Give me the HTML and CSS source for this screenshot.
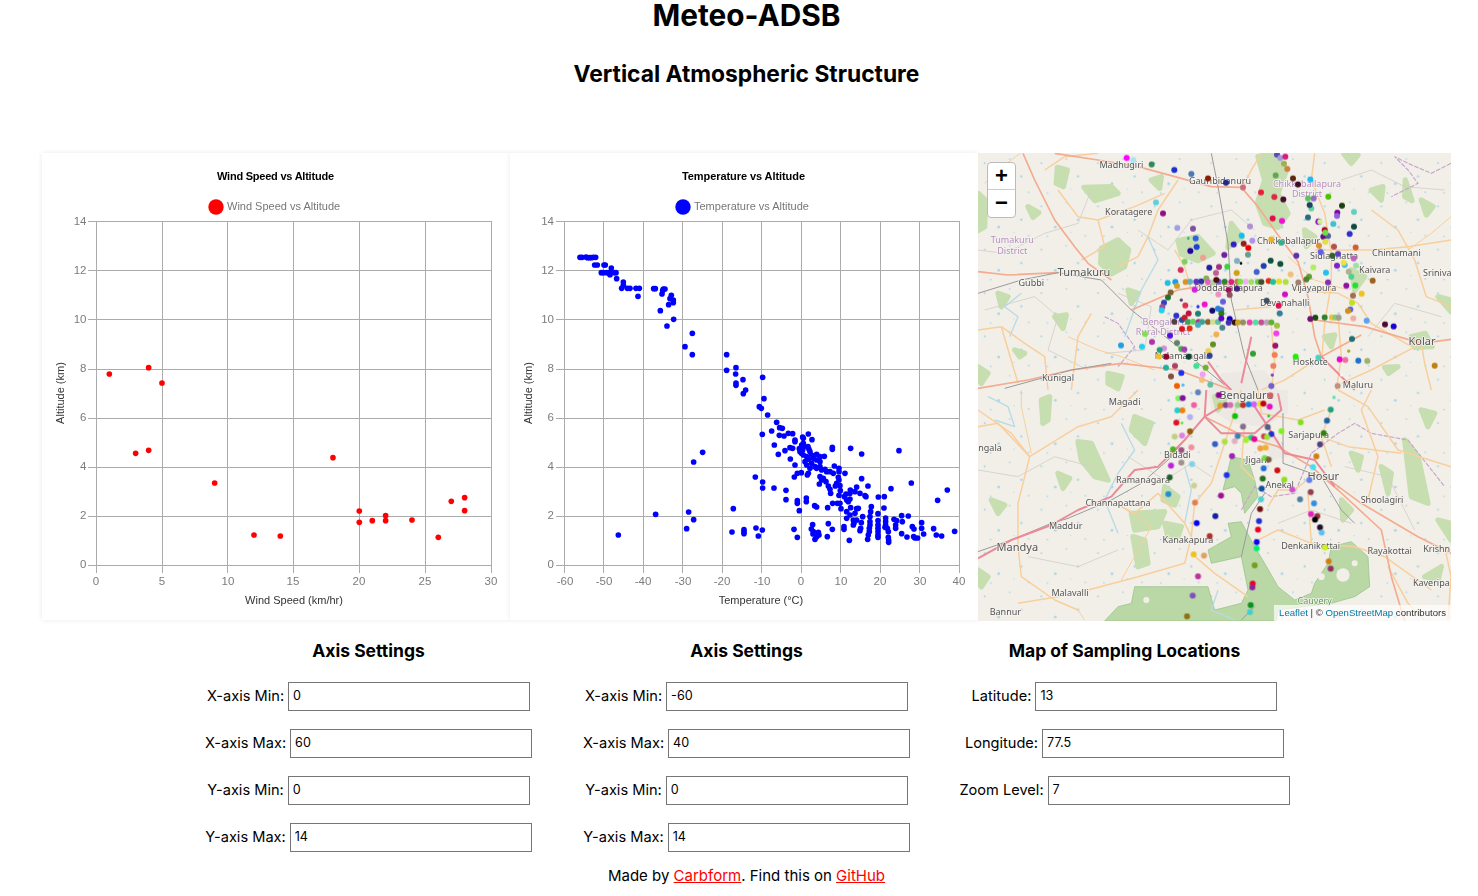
FILE: index.html
```html
<!DOCTYPE html>
<html lang="en">
<head>
<meta charset="utf-8">
<title>Meteo-ADSB</title>
<link rel="stylesheet" href="styles.css">
</head>
<body>
<div class="page">
<h1>Meteo-ADSB</h1>
<h2>Vertical Atmospheric Structure</h2>
<div class="charts">
<div class="card">
<svg class="chart" width="468" height="467" viewBox="42 153 468 467">
<text class="c-title" x="275.5" y="180" textLength="117">Wind Speed vs Altitude</text>
<circle class="red" cx="216" cy="207" r="7.7"/>
<text class="c-legend" x="227" y="210">Wind Speed vs Altitude</text>
<path class="grid" d="M96.5 221V573M162.5 221V573M227.5 221V573M293.5 221V573M359.5 221V573M425.5 221V573M491.5 221V573M88 221.5H491.5M88 270.5H491.5M88 319.5H491.5M88 369.5H491.5M88 418.5H491.5M88 467.5H491.5M88 516.5H491.5M88 565.5H491.5"/>
<g class="c-tick-y"><text x="86.5" y="225">14</text><text x="86.5" y="274">12</text><text x="86.5" y="323">10</text><text x="86.5" y="372">8</text><text x="86.5" y="421">6</text><text x="86.5" y="470">4</text><text x="86.5" y="519">2</text><text x="86.5" y="568">0</text></g>
<g class="c-tick-x"><text x="96" y="585">0</text><text x="162" y="585">5</text><text x="228" y="585">10</text><text x="293" y="585">15</text><text x="359" y="585">20</text><text x="425" y="585">25</text><text x="491" y="585">30</text></g>
<text class="c-axis" x="294" y="604">Wind Speed (km/hr)</text>
<text class="c-axis" transform="translate(64,393) rotate(-90)">Altitude (km)</text>
<g class="red" transform="translate(40,340) scale(.3333)">
<circle cx="208" cy="102" r="8.5"/><circle cx="326" cy="83" r="8.5"/><circle cx="366" cy="129" r="8.5"/><circle cx="287" cy="340" r="8.5"/><circle cx="326" cy="331" r="8.5"/><circle cx="524" cy="429" r="8.5"/><circle cx="642" cy="585" r="8.5"/><circle cx="721" cy="588" r="8.5"/><circle cx="879" cy="353" r="8.5"/><circle cx="958" cy="513" r="8.5"/><circle cx="958" cy="547" r="8.5"/><circle cx="997" cy="542" r="8.5"/><circle cx="1037" cy="527" r="8.5"/><circle cx="1037" cy="542" r="8.5"/><circle cx="1116" cy="540" r="8.5"/><circle cx="1195" cy="592" r="8.5"/><circle cx="1234" cy="484" r="8.5"/><circle cx="1274" cy="473" r="8.5"/><circle cx="1274" cy="512" r="8.5"/>
</g>
</svg>
</div>
<div class="card">
<svg class="chart" width="468" height="467" viewBox="510 153 468 467">
<text class="c-title" x="743.5" y="180" textLength="123">Temperature vs Altitude</text>
<circle class="blue" cx="683" cy="207" r="7.7"/>
<text class="c-legend" x="694" y="210">Temperature vs Altitude</text>
<path class="grid" d="M564.5 221V573M603.5 221V573M643.5 221V573M682.5 221V573M722.5 221V573M761.5 221V573M801.5 221V573M840.5 221V573M880.5 221V573M919.5 221V573M959.5 221V573M556 221.5H959.5M556 270.5H959.5M556 319.5H959.5M556 369.5H959.5M556 418.5H959.5M556 467.5H959.5M556 516.5H959.5M556 565.5H959.5"/>
<g class="c-tick-y"><text x="554" y="225">14</text><text x="554" y="274">12</text><text x="554" y="323">10</text><text x="554" y="372">8</text><text x="554" y="421">6</text><text x="554" y="470">4</text><text x="554" y="519">2</text><text x="554" y="568">0</text></g>
<g class="c-tick-x"><text x="565" y="585">-60</text><text x="604" y="585">-50</text><text x="643" y="585">-40</text><text x="683" y="585">-30</text><text x="722" y="585">-20</text><text x="762" y="585">-10</text><text x="801" y="585">0</text><text x="841" y="585">10</text><text x="880" y="585">20</text><text x="920" y="585">30</text><text x="959" y="585">40</text></g>
<text class="c-axis" x="761" y="604">Temperature (°C)</text>
<text class="c-axis" transform="translate(532,393) rotate(-90)">Altitude (km)</text>
<g class="blue" transform="translate(500,200) scale(.3333)">
<circle cx="240" cy="172" r="8.5"/><circle cx="246" cy="172" r="8.5"/><circle cx="258" cy="171" r="8.5"/><circle cx="262" cy="173" r="8.5"/><circle cx="268" cy="173" r="8.5"/><circle cx="274" cy="173" r="8.5"/><circle cx="280" cy="172" r="8.5"/><circle cx="287" cy="172" r="8.5"/><circle cx="284" cy="195" r="8.5"/><circle cx="292" cy="195" r="8.5"/><circle cx="312" cy="195" r="8.5"/><circle cx="316" cy="195" r="8.5"/><circle cx="334" cy="204" r="8.5"/><circle cx="304" cy="218" r="8.5"/><circle cx="310" cy="218" r="8.5"/><circle cx="320" cy="218" r="8.5"/><circle cx="326" cy="218" r="8.5"/><circle cx="334" cy="216" r="8.5"/><circle cx="342" cy="218" r="8.5"/><circle cx="348" cy="218" r="8.5"/><circle cx="330" cy="224" r="8.5"/><circle cx="350" cy="236" r="8.5"/><circle cx="370" cy="246" r="8.5"/><circle cx="370" cy="256" r="8.5"/><circle cx="365" cy="265" r="8.5"/><circle cx="382" cy="265" r="8.5"/><circle cx="390" cy="265" r="8.5"/><circle cx="408" cy="265" r="8.5"/><circle cx="418" cy="265" r="8.5"/><circle cx="461" cy="266" r="8.5"/><circle cx="466" cy="266" r="8.5"/><circle cx="490" cy="267" r="8.5"/><circle cx="495" cy="267" r="8.5"/><circle cx="488" cy="272" r="8.5"/><circle cx="486" cy="282" r="8.5"/><circle cx="514" cy="286" r="8.5"/><circle cx="510" cy="296" r="8.5"/><circle cx="520" cy="300" r="8.5"/><circle cx="520" cy="308" r="8.5"/><circle cx="506" cy="314" r="8.5"/><circle cx="414" cy="289" r="8.5"/><circle cx="481" cy="332" r="8.5"/><circle cx="521" cy="358" r="8.5"/><circle cx="501" cy="378" r="8.5"/><circle cx="577" cy="400" r="8.5"/><circle cx="555" cy="440" r="8.5"/><circle cx="577" cy="464" r="8.5"/><circle cx="680" cy="464" r="8.5"/><circle cx="680" cy="511" r="8.5"/><circle cx="708" cy="503" r="8.5"/><circle cx="707" cy="522" r="8.5"/><circle cx="729" cy="539" r="8.5"/><circle cx="708" cy="549" r="8.5"/><circle cx="708" cy="556" r="8.5"/><circle cx="788" cy="532" r="8.5"/><circle cx="737" cy="570" r="8.5"/><circle cx="730" cy="581" r="8.5"/><circle cx="792" cy="596" r="8.5"/>
</g>
<g class="blue" transform="translate(510,340) scale(.3333)">
<circle cx="748" cy="200" r="8.5"/><circle cx="754" cy="205" r="8.5"/><circle cx="773" cy="225" r="8.5"/><circle cx="757" cy="283" r="8.5"/><circle cx="578" cy="337" r="8.5"/><circle cx="551" cy="366" r="8.5"/><circle cx="736" cy="411" r="8.5"/><circle cx="758" cy="426" r="8.5"/><circle cx="758" cy="444" r="8.5"/><circle cx="670" cy="506" r="8.5"/><circle cx="437" cy="523" r="8.5"/><circle cx="536" cy="516" r="8.5"/><circle cx="551" cy="539" r="8.5"/><circle cx="530" cy="566" r="8.5"/><circle cx="325" cy="585" r="8.5"/><circle cx="666" cy="576" r="8.5"/><circle cx="702" cy="569" r="8.5"/><circle cx="702" cy="575" r="8.5"/><circle cx="702" cy="581" r="8.5"/><circle cx="738" cy="564" r="8.5"/><circle cx="757" cy="570" r="8.5"/><circle cx="745" cy="588" r="8.5"/>
</g>
<g class="blue" transform="translate(640,400) scale(.3333)">
<circle cx="410" cy="67" r="8.5"/><circle cx="419" cy="83" r="8.5"/><circle cx="427" cy="85" r="8.5"/><circle cx="395" cy="93" r="8.5"/><circle cx="418" cy="106" r="8.5"/><circle cx="432" cy="108" r="8.5"/><circle cx="445" cy="100" r="8.5"/><circle cx="458" cy="101" r="8.5"/><circle cx="488" cy="111" r="8.5"/><circle cx="490" cy="115" r="8.5"/><circle cx="505" cy="102" r="8.5"/><circle cx="516" cy="119" r="8.5"/><circle cx="465" cy="120" r="8.5"/><circle cx="465" cy="125" r="8.5"/><circle cx="403" cy="135" r="8.5"/><circle cx="450" cy="143" r="8.5"/><circle cx="458" cy="145" r="8.5"/><circle cx="435" cy="152" r="8.5"/><circle cx="415" cy="163" r="8.5"/><circle cx="451" cy="177" r="8.5"/><circle cx="465" cy="195" r="8.5"/><circle cx="472" cy="220" r="8.5"/><circle cx="484" cy="218" r="8.5"/><circle cx="463" cy="231" r="8.5"/>
<circle cx="478" cy="146" r="8.5"/><circle cx="485" cy="135" r="8.5"/><circle cx="490" cy="130" r="8.5"/><circle cx="492" cy="140" r="8.5"/><circle cx="504" cy="140" r="8.5"/><circle cx="507" cy="148" r="8.5"/><circle cx="480" cy="155" r="8.5"/><circle cx="488" cy="150" r="8.5"/><circle cx="490" cy="165" r="8.5"/><circle cx="485" cy="160" r="8.5"/><circle cx="510" cy="155" r="8.5"/><circle cx="515" cy="165" r="8.5"/><circle cx="530" cy="163" r="8.5"/><circle cx="540" cy="170" r="8.5"/><circle cx="553" cy="169" r="8.5"/><circle cx="500" cy="170" r="8.5"/><circle cx="505" cy="178" r="8.5"/><circle cx="520" cy="175" r="8.5"/><circle cx="530" cy="180" r="8.5"/><circle cx="540" cy="185" r="8.5"/><circle cx="495" cy="185" r="8.5"/><circle cx="500" cy="195" r="8.5"/><circle cx="515" cy="190" r="8.5"/><circle cx="525" cy="200" r="8.5"/><circle cx="530" cy="205" r="8.5"/><circle cx="540" cy="200" r="8.5"/><circle cx="545" cy="210" r="8.5"/><circle cx="555" cy="208" r="8.5"/><circle cx="560" cy="215" r="8.5"/><circle cx="570" cy="215" r="8.5"/><circle cx="580" cy="220" r="8.5"/><circle cx="510" cy="205" r="8.5"/><circle cx="505" cy="220" r="8.5"/><circle cx="502" cy="225" r="8.5"/><circle cx="540" cy="230" r="8.5"/><circle cx="550" cy="235" r="8.5"/><circle cx="545" cy="240" r="8.5"/><circle cx="558" cy="245" r="8.5"/><circle cx="565" cy="258" r="8.5"/><circle cx="570" cy="268" r="8.5"/><circle cx="572" cy="280" r="8.5"/><circle cx="538" cy="252" r="8.5"/><circle cx="577" cy="142" r="8.5"/><circle cx="577" cy="148" r="8.5"/><circle cx="632" cy="145" r="8.5"/><circle cx="665" cy="162" r="8.5"/><circle cx="777" cy="152" r="8.5"/><circle cx="583" cy="198" r="8.5"/><circle cx="597" cy="205" r="8.5"/><circle cx="597" cy="215" r="8.5"/><circle cx="615" cy="220" r="8.5"/><circle cx="595" cy="232" r="8.5"/><circle cx="597" cy="240" r="8.5"/><circle cx="590" cy="250" r="8.5"/><circle cx="586" cy="258" r="8.5"/><circle cx="600" cy="257" r="8.5"/><circle cx="665" cy="236" r="8.5"/><circle cx="684" cy="258" r="8.5"/><circle cx="650" cy="261" r="8.5"/><circle cx="631" cy="270" r="8.5"/><circle cx="618" cy="282" r="8.5"/><circle cx="630" cy="280" r="8.5"/><circle cx="645" cy="275" r="8.5"/><circle cx="660" cy="280" r="8.5"/><circle cx="675" cy="287" r="8.5"/><circle cx="678" cy="290" r="8.5"/><circle cx="601" cy="272" r="8.5"/><circle cx="597" cy="286" r="8.5"/><circle cx="613" cy="290" r="8.5"/><circle cx="620" cy="300" r="8.5"/><circle cx="630" cy="297" r="8.5"/><circle cx="625" cy="305" r="8.5"/><circle cx="753" cy="266" r="8.5"/><circle cx="715" cy="291" r="8.5"/><circle cx="733" cy="290" r="8.5"/><circle cx="814" cy="249" r="8.5"/><circle cx="922" cy="270" r="8.5"/><circle cx="893" cy="301" r="8.5"/>
<circle cx="402" cy="264" r="8.5"/><circle cx="438" cy="271" r="8.5"/><circle cx="438" cy="299" r="8.5"/><circle cx="472" cy="302" r="8.5"/><circle cx="472" cy="310" r="8.5"/><circle cx="499" cy="294" r="8.5"/><circle cx="499" cy="305" r="8.5"/><circle cx="478" cy="332" r="8.5"/><circle cx="524" cy="317" r="8.5"/><circle cx="530" cy="321" r="8.5"/><circle cx="563" cy="323" r="8.5"/><circle cx="578" cy="310" r="8.5"/><circle cx="592" cy="310" r="8.5"/><circle cx="600" cy="310" r="8.5"/><circle cx="603" cy="326" r="8.5"/><circle cx="620" cy="335" r="8.5"/><circle cx="632" cy="323" r="8.5"/><circle cx="650" cy="326" r="8.5"/><circle cx="655" cy="325" r="8.5"/><circle cx="645" cy="340" r="8.5"/><circle cx="630" cy="345" r="8.5"/><circle cx="620" cy="355" r="8.5"/><circle cx="668" cy="350" r="8.5"/><circle cx="640" cy="360" r="8.5"/><circle cx="642" cy="370" r="8.5"/><circle cx="640" cy="375" r="8.5"/><circle cx="650" cy="360" r="8.5"/><circle cx="664" cy="368" r="8.5"/><circle cx="662" cy="385" r="8.5"/><circle cx="660" cy="392" r="8.5"/><circle cx="612" cy="380" r="8.5"/><circle cx="612" cy="388" r="8.5"/><circle cx="565" cy="371" r="8.5"/><circle cx="577" cy="388" r="8.5"/><circle cx="518" cy="374" r="8.5"/><circle cx="514" cy="387" r="8.5"/><circle cx="520" cy="395" r="8.5"/><circle cx="519" cy="402" r="8.5"/><circle cx="535" cy="397" r="8.5"/><circle cx="537" cy="405" r="8.5"/><circle cx="530" cy="410" r="8.5"/><circle cx="525" cy="418" r="8.5"/><circle cx="462" cy="388" r="8.5"/><circle cx="472" cy="412" r="8.5"/><circle cx="562" cy="410" r="8.5"/>
<circle cx="694" cy="320" r="8.5"/><circle cx="692" cy="335" r="8.5"/><circle cx="690" cy="350" r="8.5"/><circle cx="690" cy="365" r="8.5"/><circle cx="690" cy="375" r="8.5"/><circle cx="688" cy="385" r="8.5"/><circle cx="688" cy="395" r="8.5"/><circle cx="685" cy="405" r="8.5"/><circle cx="683" cy="418" r="8.5"/><circle cx="714" cy="341" r="8.5"/><circle cx="714" cy="362" r="8.5"/><circle cx="714" cy="375" r="8.5"/><circle cx="714" cy="385" r="8.5"/><circle cx="714" cy="395" r="8.5"/><circle cx="714" cy="405" r="8.5"/><circle cx="714" cy="412" r="8.5"/><circle cx="732" cy="324" r="8.5"/><circle cx="737" cy="354" r="8.5"/><circle cx="737" cy="365" r="8.5"/><circle cx="737" cy="375" r="8.5"/><circle cx="735" cy="382" r="8.5"/><circle cx="742" cy="385" r="8.5"/><circle cx="745" cy="395" r="8.5"/><circle cx="745" cy="412" r="8.5"/><circle cx="746" cy="420" r="8.5"/><circle cx="746" cy="427" r="8.5"/><circle cx="762" cy="358" r="8.5"/><circle cx="770" cy="362" r="8.5"/><circle cx="767" cy="375" r="8.5"/><circle cx="767" cy="385" r="8.5"/><circle cx="785" cy="347" r="8.5"/><circle cx="805" cy="348" r="8.5"/><circle cx="787" cy="365" r="8.5"/><circle cx="817" cy="380" r="8.5"/><circle cx="822" cy="387" r="8.5"/><circle cx="845" cy="368" r="8.5"/><circle cx="845" cy="385" r="8.5"/><circle cx="851" cy="402" r="8.5"/><circle cx="785" cy="401" r="8.5"/><circle cx="801" cy="411" r="8.5"/><circle cx="821" cy="410" r="8.5"/><circle cx="825" cy="414" r="8.5"/><circle cx="833" cy="414" r="8.5"/><circle cx="881" cy="386" r="8.5"/><circle cx="889" cy="405" r="8.5"/><circle cx="905" cy="408" r="8.5"/><circle cx="944" cy="394" r="8.5"/><circle cx="628" cy="421" r="8.5"/>
</g>
</svg>
</div>
<div class="map">
<svg class="map-svg" width="473" height="468" viewBox="0 0 1419 1404">
<defs>
<pattern id="specks" width="170" height="130" patternUnits="userSpaceOnUse">
<circle class="speck" cx="20" cy="30" r="3"/><circle class="speck" cx="62" cy="92" r="4"/><circle class="speck" cx="95" cy="18" r="2.5"/><circle class="speck" cx="130" cy="70" r="3.5"/><circle class="speck" cx="152" cy="118" r="2.5"/><circle class="speck" cx="38" cy="120" r="2.5"/><circle class="speck" cx="108" cy="108" r="2"/>
</pattern>
</defs>
<g class="tiles">
<rect class="land" width="1419" height="1404"/>
<rect class="specks" width="1419" height="1404"/>
<g transform="translate(0,-9)">
<path class="wood" d="M840 20L880 10L925 60L900 130L930 190L900 232L860 220L838 160L860 90Z"/>
<path class="wood" d="M0 130L22 150L20 230L0 242Z"/>
<path class="wood" d="M238 52L268 60L256 110L235 100Z"/>
<path class="wood" d="M150 170L182 188L165 202Z"/>
<path class="wood" d="M370 295L420 270L452 300L440 350L400 372L368 340Z"/>
<path class="wood" d="M600 272L660 260L705 310L660 332L610 312Z"/>
<path class="wood" d="M318 112L400 110L420 130L350 152Z"/>
<path class="wood" d="M760 220L792 262L750 292Z"/>
<path class="wood" d="M1282 90L1302 152L1280 140Z"/>
<path class="wood" d="M1098 12L1140 15L1120 40Z"/>
<path class="wood" d="M1120 360L1160 380L1130 422Z"/>
<path class="wood" d="M1300 560L1342 550L1362 590L1310 592Z"/>
<path class="wood" d="M1220 652L1260 650L1232 670Z"/>
<path class="wood" d="M390 670L432 680L420 716L390 700Z"/>
<path class="wood" d="M0 650L30 670L10 700L0 690Z"/>
<path class="wood" d="M110 600L140 610L125 620Z"/>
<path class="wood" d="M60 120L85 130L70 160Z"/>
<path class="wood" d="M520 90L550 80L545 115Z"/>
<path class="wood" d="M1180 120L1215 110L1210 150Z"/>
<path class="wood" d="M1330 150L1365 170L1345 195Z"/>
<path class="wood" d="M60 430L90 440L70 470Z"/>
<path class="wood" d="M230 500L265 495L255 535Z"/>
<path class="wood" d="M450 420L480 430L460 460Z"/>
<path class="wood" d="M1040 560L1070 555L1060 590Z"/>
<path class="wood" d="M1380 440L1419 450L1419 485Z"/>
<path class="wood" d="M980 240L1010 260L985 290Z"/>
<path class="urban" d="M730 670L860 660L900 720L700 720Z"/>
<path class="minor" d="M0 300L80 310L200 250L300 220L340 120"/>
<path class="minor" d="M20 480L170 440L240 500L210 600L330 660"/>
<path class="minor" d="M480 240L570 300L640 210L760 180L830 240"/>
<path class="minor" d="M1090 90L1180 60L1280 110L1400 120"/>
<path class="minor" d="M1170 560L1250 460L1390 500"/>
<path class="minor" d="M420 430L520 470L500 600L380 610"/>
<path class="water" d="M130 430L80 470L120 500L95 560"/>
<path class="water" d="M510 260L540 330L490 420L440 560"/>
<path class="boundary" d="M1419 40L1360 70L1290 40L1250 20L1290 60L1320 100L1240 140"/>
<path class="boundary" d="M380 500L420 520L470 590L420 650"/>
<path class="road" d="M200 60L260 20L360 10"/>
<path class="road" d="M240 120L300 200L360 210L470 170L560 130"/>
<path class="road" d="M360 210L380 290L310 330"/>
<path class="road" d="M600 90L540 180L510 260L480 320L420 350"/>
<path class="road" d="M790 120L820 60L850 10"/>
<path class="road" d="M1010 10L1000 90L1040 190L1060 310L1060 400L1040 520L1030 640"/>
<path class="road" d="M1010 300L1180 300L1290 290L1419 270"/>
<path class="road" d="M1180 180L1260 240L1310 330L1345 440L1419 470"/>
<path class="road" d="M950 420L1080 430L1140 460L1180 520L1300 590"/>
<path class="road" d="M1330 580L1340 640L1360 720"/>
<path class="road" d="M1330 580L1180 660L1090 700"/>
<path class="road" d="M0 540L70 530L140 580L200 620L210 720"/>
<path class="road" d="M70 530L120 700"/>
<path class="road" d="M340 490L300 560L280 720"/>
<path class="road" d="M640 420L620 350L590 300"/>
<path class="road" d="M880 530L890 640L880 720"/>
<path class="road" d="M880 470L770 480"/>
<path class="road" d="M1080 500L1090 620L1075 720"/>
<path class="road" d="M1030 620L920 690L850 720"/>
<path class="road thin" d="M530 660L430 620L360 600L270 560"/>
<path class="road thin" d="M930 320L1010 390L1110 420"/>
<path class="road thin" d="M140 0L60 60L20 100"/>
<path class="road thin" d="M1419 200L1360 250L1290 300"/>
<path class="trunk" d="M135 10L170 90L230 210L290 290L330 340L400 390"/>
<path class="trunk" d="M0 365L90 375L240 368"/>
<path class="trunk" d="M230 10L360 30L480 50L610 85L700 110L790 112L840 170L900 255L960 335L990 440L1010 560L1030 620"/>
<path class="trunk" d="M460 480L600 420L720 400L790 410"/>
<path class="trunk" d="M1010 510L1160 530L1330 580L1419 568"/>
<path class="trunk" d="M1030 620L1150 555"/>
<path class="trunk" d="M0 715L150 690L280 660L430 640L600 660L760 720"/>
<path class="rail" d="M0 430L130 390L240 368L370 390L460 480L600 590L740 705"/>
<path class="rail" d="M700 10L720 110L750 280L760 450L800 620L840 720"/>
<path class="rail" d="M80 715L280 660L400 640"/>
<path class="motor" d="M690 635L730 690L760 720"/>
<path class="motor" d="M820 560L790 700"/>
<path class="motor" d="M1130 720L1030 620"/>
<text class="lb" x="430" y="53">Madhugiri</text>
<text class="lb" x="726" y="103">Gauribidanuru</text>
<text class="lb pur" x="987" y="110">Chikkaballapura</text>
<text class="lb pur" x="987" y="142">District</text>
<text class="lb" x="452" y="194">Koratagere</text>
<text class="lb pur" x="103" y="280">Tumakuru</text>
<text class="lb pur" x="103" y="311">District</text>
<text class="lb" x="932" y="281">Chikkaballapur</text>
<text class="lb big" x="318" y="378">Tumakuru</text>
<text class="lb" x="160" y="407">Gubbi</text>
<text class="lb" x="1068" y="328">Sidlaghatta</text>
<text class="lb" x="1255" y="317">Chintamani</text>
<text class="lb" x="1190" y="368">Kaivara</text>
<text class="lb" x="1378" y="378">Sriniva</text>
<text class="lb" x="752" y="423">Doddaballapura</text>
<text class="lb" x="1008" y="423">Vijayapura</text>
<text class="lb" x="920" y="468">Devanahalli</text>
<text class="lb pur" x="560" y="524">Bengaluru</text>
<text class="lb pur" x="555" y="555">Rural District</text>
<text class="lb" x="615" y="626">Nelamangala</text>
<text class="lb big" x="1332" y="584">Kolar</text>
<text class="lb" x="997" y="646">Hoskote</text>
<text class="lb" x="240" y="694">Kunigal</text>
<text class="lb" x="1140" y="713">Maluru</text>
</g>
<g transform="translate(0,711)">
<path class="urban" d="M690 0L930 0L930 70L860 110L760 100L700 60Z"/>
<path class="urban" d="M850 150L900 140L930 200L880 210Z"/>
<path class="wood" d="M190 30L215 20L210 90L195 100Z"/>
<path class="wood" d="M470 80L520 100L500 160L460 120Z"/>
<path class="wood" d="M300 155L340 160L390 270L350 260L310 210Z"/>
<path class="wood" d="M1280 150L1320 200L1350 340L1300 320Z"/>
<path class="wood" d="M1090 330L1120 360L1095 390Z"/>
<path class="wood" d="M460 370L560 365L540 410L470 420Z"/>
<path class="wood" d="M465 440L500 450L510 520L480 530Z"/>
<path class="wood" d="M560 290L600 320L590 345L555 330Z"/>
<path class="wood" d="M560 400L610 410L600 440L570 440Z"/>
<path class="wood" d="M0 540L30 560L10 590L0 580Z"/>
<path class="wood" d="M1380 390L1419 400L1419 450Z"/>
<path class="wood" d="M1340 560L1390 530L1380 570Z"/>
<path class="wood" d="M1210 230L1240 250L1230 310Z"/>
<path class="wood" d="M1120 190L1150 200L1140 240Z"/>
<path class="wood" d="M1330 60L1370 70L1350 110Z"/>
<path class="wood" d="M40 330L80 345L60 370Z"/>
<path class="wood" d="M240 250L275 265L255 295Z"/>
<path class="wood" d="M710 20L740 30L720 60Z"/>
<path class="park" d="M380 693L420 650L460 640L470 590L530 590L640 590L690 590L710 660L790 640L810 600L790 500L700 520L690 480L760 440L750 400L790 395L830 470L860 520L900 590L950 630L1000 610L1010 580L1050 520L1060 470L1120 455L1170 500L1175 590L1130 620L1060 640L900 660L895 693Z"/>
<path class="park" d="M735 300L760 200L810 210L830 270L840 320L800 370L790 310L770 290Z"/>
<circle class="land" cx="1095" cy="555" r="20"/><circle class="land" cx="1030" cy="560" r="10"/><circle class="land" cx="920" cy="590" r="10"/><circle class="land" cx="1130" cy="520" r="9"/><circle class="land" cx="505" cy="630" r="9"/>
<path class="minor" d="M0 240L120 260L230 200L340 230"/>
<path class="minor" d="M450 200L560 270L640 220L700 260"/>
<path class="minor" d="M1100 230L1230 260L1310 420"/>
<path class="minor" d="M150 500L300 530L420 480"/>
<path class="minor" d="M900 400L1000 360L1120 400"/>
<path class="water" d="M770 690L700 660L720 600"/>
<path class="water" d="M30 20L90 50L110 110L50 90"/>
<path class="water" d="M430 100L470 180L420 250L380 330L420 430"/>
<path class="water" d="M620 230L640 300L620 400"/>
<path class="boundary" d="M790 360L830 290L880 320L950 310L1000 190L1080 130L1130 100L1180 130L1290 150L1400 290"/>
<path class="road" d="M1080 0L1170 50L1260 180L1419 230"/>
<path class="road" d="M1000 130L1110 170L1270 190"/>
<path class="road" d="M0 60L100 130L155 200L120 340L120 470L130 560L230 630L300 660"/>
<path class="road" d="M0 110L60 100L155 200L300 110L400 80L480 0"/>
<path class="road" d="M120 640L240 620L330 600L480 560L620 520L640 440L650 340L700 280L760 100L790 0"/>
<path class="road" d="M430 350L470 370L540 310L620 400L640 440"/>
<path class="road" d="M640 490L710 550L810 620"/>
<path class="road" d="M840 450L900 420L1000 460L1130 470L1220 500L1360 600"/>
<path class="road" d="M870 350L900 300L950 300L1000 260"/>
<path class="road" d="M990 310L1000 460"/>
<path class="road" d="M1060 230L1030 140L1060 60"/>
<path class="road" d="M800 100L790 230L830 270"/>
<path class="road" d="M1180 0L1150 60L1200 200L1170 330"/>
<path class="road" d="M1230 530L1290 640L1340 690"/>
<path class="road" d="M1400 470L1419 560L1410 690"/>
<path class="road" d="M840 0L850 70L960 90L1040 60"/>
<path class="road thin" d="M130 0L130 50L160 190"/>
<path class="road thin" d="M430 350L520 410L430 570"/>
<path class="road thin" d="M300 660L320 690"/>
<path class="trunk" d="M680 80L800 140L900 170L1000 230L1080 300L1210 420L1240 560L1280 693"/>
<path class="trunk" d="M1040 260L1150 340L1320 440L1419 490"/>
<path class="rail" d="M0 485L100 450L220 400L270 385L400 330L490 280L570 210L620 150L680 80L730 50"/>
<path class="rail" d="M915 70L915 220L1030 260L1090 360L1130 400"/>
<path class="rail" d="M790 500L820 370L860 310"/>
<path class="rail" d="M790 690L830 650"/>
<path class="motor" d="M0 505L100 450L220 405L300 360L400 320L470 240L540 230L620 150L680 80L730 50"/>
<path class="motor" d="M680 80L730 130L830 130L910 60L900 10"/>
<path class="motor" d="M830 50L870 110L920 190L1010 210L1070 290"/>
<path class="motor" d="M685 0L680 80"/>
<text class="lb" x="440" y="44">Magadi</text>
<text class="lb big" x="805" y="27">Bengaluru</text>
<text class="lb" x="36" y="182">ngala</text>
<text class="lb" x="598" y="203">Bidadi</text>
<text class="lb" x="992" y="143">Sarjapura</text>
<text class="lb" x="838" y="219">Jigani</text>
<text class="lb" x="495" y="278">Ramanagara</text>
<text class="lb big" x="1036" y="271">Hosur</text>
<text class="lb" x="905" y="293">Anekal</text>
<text class="lb" x="1212" y="338">Shoolagiri</text>
<text class="lb" x="420" y="349">Channapattana</text>
<text class="lb" x="263" y="418">Maddur</text>
<text class="lb big" x="118" y="484">Mandya</text>
<text class="lb" x="630" y="460">Kanakapura</text>
<text class="lb" x="998" y="478">Denkanikottai</text>
<text class="lb" x="1235" y="491">Rayakottai</text>
<text class="lb" x="1376" y="485">Krishn</text>
<text class="lb" x="276" y="617">Malavalli</text>
<text class="lb" x="1360" y="587">Kaveripa</text>
<text class="lb" x="82" y="674">Bannur</text>
<text class="lb grn" x="1010" y="643">Cauvery</text>
</g>
</g>
<g class="dots">
<g transform="translate(0,-9)">
<circle cx="446" cy="24" r="9" fill="#f0f"/><circle cx="466" cy="30" r="9" fill="#a9e5f5"/><circle cx="521" cy="43" r="9" fill="#2e8b57"/><circle cx="589" cy="60" r="9" fill="#1a33cc"/><circle cx="640" cy="72" r="9" fill="#4a7ab5"/><circle cx="690" cy="85" r="9" fill="#8b1a00"/><circle cx="744" cy="98" r="9" fill="#1a2a8a"/><circle cx="795" cy="112" r="9" fill="#d06a7a"/><circle cx="849" cy="127" r="9" fill="#e8203a"/><circle cx="889" cy="141" r="9" fill="#dd2a4a"/><circle cx="916" cy="148" r="9" fill="#4a0a30"/><circle cx="897" cy="14" r="9" fill="#5a4ab0"/><circle cx="907" cy="24" r="9" fill="#a09ae0"/><circle cx="922" cy="20" r="9" fill="#d81b80"/><circle cx="918" cy="41" r="9" fill="#a0b050"/><circle cx="928" cy="57" r="9" fill="#d08040"/><circle cx="893" cy="76" r="9" fill="#60a850"/><circle cx="945" cy="85" r="9" fill="#5a2a10"/><circle cx="960" cy="103" r="9" fill="#3a0a20"/><circle cx="997" cy="88" r="9" fill="#20b8f0"/><circle cx="1007" cy="145" r="9" fill="#9070c0"/><circle cx="990" cy="145" r="9" fill="#60c060"/><circle cx="1051" cy="140" r="9" fill="#50c000"/><circle cx="1092" cy="167" r="9" fill="#1a4010"/><circle cx="1000" cy="175" r="9" fill="#60d0a0"/><circle cx="995" cy="165" r="9" fill="#204060"/><circle cx="1078" cy="188" r="9" fill="#8000a0"/><circle cx="1077" cy="198" r="9" fill="#9060e0"/><circle cx="1128" cy="186" r="9" fill="#60d0c0"/><circle cx="990" cy="202" r="9" fill="#2a6a7a"/><circle cx="1022" cy="215" r="10" fill="#8020c0"/><circle cx="1026" cy="215" r="8" fill="#d0f090"/><circle cx="1066" cy="222" r="9" fill="#40c0d0"/><circle cx="1128" cy="230" r="9" fill="#104a40"/><circle cx="884" cy="205" r="9" fill="#e0104a"/><circle cx="912" cy="213" r="9" fill="#f010d0"/><circle cx="816" cy="229" r="9" fill="#b090d0"/><circle cx="791" cy="257" r="9" fill="#10c0f0"/><circle cx="823" cy="272" r="9" fill="#b090f0"/><circle cx="880" cy="268" r="9" fill="#f0b020"/><circle cx="910" cy="278" r="9" fill="#30b090"/><circle cx="1040" cy="240" r="9" fill="#a01030"/><circle cx="1036" cy="260" r="9" fill="#601080"/><circle cx="1050" cy="258" r="9" fill="#5060a0"/><circle cx="1042" cy="248" r="9" fill="#70e040"/><circle cx="1042" cy="275" r="9" fill="#e0e040"/><circle cx="1115" cy="252" r="9" fill="#3030d0"/><circle cx="1023" cy="287" r="9" fill="#e09030"/><circle cx="1068" cy="290" r="9" fill="#b05050"/><circle cx="1133" cy="292" r="9" fill="#d06030"/><circle cx="1028" cy="306" r="9" fill="#6060e0"/><circle cx="1080" cy="312" r="9" fill="#5a40c0"/><circle cx="1063" cy="317" r="9" fill="#306030"/><circle cx="955" cy="317" r="9" fill="#5a30b0"/><circle cx="1127" cy="325" r="9" fill="#c060c0"/><circle cx="1100" cy="345" r="9" fill="#40c0e0"/><circle cx="1097" cy="338" r="9" fill="#f0e040"/><circle cx="1077" cy="347" r="9" fill="#8020c0"/><circle cx="1134" cy="347" r="9" fill="#a0e0a0"/><circle cx="1006" cy="352" r="9" fill="#b0f060"/><circle cx="1044" cy="368" r="9" fill="#20c0f0"/><circle cx="1112" cy="365" r="9" fill="#b0b090"/><circle cx="1120" cy="380" r="9" fill="#50d090"/><circle cx="1184" cy="392" r="9" fill="#a06020"/><circle cx="993" cy="380" r="9" fill="#60a030"/><circle cx="985" cy="388" r="9" fill="#508030"/><circle cx="938" cy="373" r="9" fill="#f0c080"/><circle cx="961" cy="397" r="9" fill="#a08070"/><circle cx="1050" cy="397" r="9" fill="#8030b0"/><circle cx="1105" cy="407" r="9" fill="#9010a0"/><circle cx="1132" cy="406" r="9" fill="#20e030"/><circle cx="1151" cy="431" r="9" fill="#f0c020"/><circle cx="1125" cy="437" r="9" fill="#a07050"/><circle cx="1122" cy="458" r="9" fill="#c0e020"/><circle cx="1117" cy="478" r="9" fill="#6060f0"/><circle cx="1110" cy="483" r="9" fill="#d09010"/><circle cx="1126" cy="505" r="9" fill="#f0b0a0"/><circle cx="1166" cy="512" r="9" fill="#60a0f0"/><circle cx="1221" cy="523" r="9" fill="#500a30"/><circle cx="1247" cy="529" r="9" fill="#2000d0"/><circle cx="1122" cy="567" r="9" fill="#207070"/><circle cx="1112" cy="603" r="5" fill="#b0a020"/><circle cx="1370" cy="647" r="9" fill="#c08010"/><circle cx="1168" cy="633" r="9" fill="#a0b070"/><circle cx="1141" cy="632" r="9" fill="#2070d0"/><circle cx="1102" cy="630" r="9" fill="#f070a0"/><circle cx="1085" cy="628" r="9" fill="#f000d0"/><circle cx="1021" cy="623" r="9" fill="#50d0c0"/><circle cx="953" cy="620" r="9" fill="#20f000"/>
<circle cx="598" cy="234" r="9" fill="#a0a0e0"/><circle cx="645" cy="236" r="9" fill="#8050a0"/><circle cx="653" cy="265" r="9" fill="#3060e0"/><circle cx="631" cy="265" r="4" fill="#30b070"/><circle cx="637" cy="303" r="9" fill="#2000a0"/><circle cx="656" cy="291" r="9" fill="#2040d0"/><circle cx="675" cy="323" r="9" fill="#f0a090"/><circle cx="555" cy="190" r="9" fill="#901080"/><circle cx="534" cy="157" r="9" fill="#60d0e0"/><circle cx="739" cy="315" r="9" fill="#7020a0"/><circle cx="767" cy="283" r="9" fill="#3020c0"/><circle cx="797" cy="281" r="9" fill="#902020"/><circle cx="811" cy="294" r="9" fill="#f00000"/><circle cx="810" cy="314" r="9" fill="#60a090"/><circle cx="777" cy="333" r="9" fill="#80b0c0"/><circle cx="789" cy="340" r="4" fill="#000"/><circle cx="878" cy="332" r="9" fill="#105040"/><circle cx="907" cy="342" r="9" fill="#105040"/><circle cx="857" cy="348" r="9" fill="#2040b0"/><circle cx="836" cy="366" r="9" fill="#4060d0"/><circle cx="748" cy="350" r="9" fill="#40d040"/><circle cx="723" cy="351" r="9" fill="#a03080"/><circle cx="694" cy="353" r="9" fill="#2020a0"/><circle cx="714" cy="369" r="9" fill="#c06090"/><circle cx="776" cy="369" r="9" fill="#d0a010"/><circle cx="620" cy="335" r="9" fill="#80d060"/><circle cx="608" cy="360" r="9" fill="#d03060"/>
<circle cx="569" cy="399" r="9" fill="#20c0e0"/><circle cx="592" cy="396" r="9" fill="#10a0f0"/><circle cx="623" cy="396" r="9" fill="#e09020"/><circle cx="636" cy="395" r="9" fill="#60b0c0"/><circle cx="655" cy="395" r="9" fill="#6030c0"/><circle cx="670" cy="394" r="9" fill="#3030a0"/><circle cx="685" cy="385" r="9" fill="#80b050"/><circle cx="690" cy="396" r="9" fill="#e060c0"/><circle cx="706" cy="397" r="9" fill="#b0d0a0"/><circle cx="722" cy="395" r="9" fill="#6060e0"/><circle cx="715" cy="390" r="9" fill="#4a1010"/><circle cx="740" cy="395" r="9" fill="#308030"/><circle cx="760" cy="396" r="9" fill="#e02080"/><circle cx="778" cy="395" r="9" fill="#c08040"/><circle cx="787" cy="395" r="9" fill="#80e040"/><circle cx="803" cy="395" r="9" fill="#f0b0f0"/><circle cx="820" cy="396" r="9" fill="#a0e060"/><circle cx="840" cy="396" r="9" fill="#70c050"/><circle cx="850" cy="396" r="9" fill="#405030"/><circle cx="872" cy="393" r="9" fill="#e03010"/><circle cx="885" cy="396" r="9" fill="#20c0a0"/><circle cx="903" cy="394" r="9" fill="#e0e020"/><circle cx="923" cy="396" r="9" fill="#b0e040"/>
<circle cx="650" cy="419" r="9" fill="#d020e0"/><circle cx="597" cy="408" r="9" fill="#d0a020"/><circle cx="578" cy="427" r="9" fill="#806030"/><circle cx="570" cy="442" r="9" fill="#207030"/><circle cx="558" cy="458" r="9" fill="#3040c0"/><circle cx="553" cy="471" r="9" fill="#a050a0"/><circle cx="551" cy="481" r="9" fill="#20d0f0"/><circle cx="622" cy="466" r="9" fill="#e03050"/><circle cx="610" cy="450" r="5" fill="#604070"/><circle cx="660" cy="470" r="5" fill="#3030f0"/><circle cx="680" cy="463" r="9" fill="#f010d0"/><circle cx="703" cy="482" r="9" fill="#101070"/><circle cx="720" cy="476" r="9" fill="#2080e0"/><circle cx="730" cy="480" r="9" fill="#4070d0"/><circle cx="735" cy="455" r="9" fill="#6060e0"/><circle cx="721" cy="433" r="9" fill="#f090c0"/><circle cx="752" cy="420" r="9" fill="#a0105a"/><circle cx="777" cy="416" r="9" fill="#402080"/><circle cx="755" cy="435" r="9" fill="#905060"/><circle cx="866" cy="452" r="9" fill="#405060"/><circle cx="921" cy="433" r="9" fill="#d010c0"/><circle cx="902" cy="467" r="9" fill="#e01050"/><circle cx="905" cy="490" r="9" fill="#30809a"/><circle cx="632" cy="490" r="9" fill="#c01040"/><circle cx="660" cy="491" r="9" fill="#208070"/>
<circle cx="589" cy="515" r="9" fill="#504040"/><circle cx="595" cy="497" r="9" fill="#3030d0"/><circle cx="612" cy="510" r="9" fill="#2050a0"/><circle cx="620" cy="503" r="9" fill="#c02030"/><circle cx="630" cy="516" r="9" fill="#40a060"/><circle cx="645" cy="515" r="9" fill="#60d060"/><circle cx="662" cy="516" r="9" fill="#b03080"/><circle cx="672" cy="516" r="9" fill="#40a090"/><circle cx="690" cy="516" r="9" fill="#906030"/><circle cx="705" cy="516" r="9" fill="#d0e090"/><circle cx="720" cy="516" r="9" fill="#60c0a0"/><circle cx="730" cy="490" r="9" fill="#208010"/><circle cx="730" cy="505" r="9" fill="#6000c0"/><circle cx="755" cy="507" r="9" fill="#1000c0"/><circle cx="752" cy="518" r="9" fill="#4030b0"/><circle cx="770" cy="517" r="9" fill="#301010"/><circle cx="780" cy="517" r="9" fill="#d0a020"/><circle cx="795" cy="517" r="9" fill="#909060"/><circle cx="815" cy="517" r="9" fill="#f040b0"/><circle cx="833" cy="517" r="9" fill="#50e0a0"/><circle cx="850" cy="517" r="9" fill="#c05090"/><circle cx="866" cy="517" r="9" fill="#c0a0c0"/><circle cx="880" cy="517" r="9" fill="#60b030"/><circle cx="897" cy="527" r="9" fill="#a0c040"/><circle cx="612" cy="537" r="9" fill="#e01020"/><circle cx="635" cy="535" r="9" fill="#e03010"/><circle cx="660" cy="525" r="9" fill="#40b0c0"/><circle cx="733" cy="533" r="9" fill="#508090"/><circle cx="501" cy="552" r="9" fill="#80e050"/><circle cx="576" cy="557" r="9" fill="#5010e0"/><circle cx="715" cy="553" r="9" fill="#f0b050"/><circle cx="895" cy="550" r="9" fill="#f040f0"/><circle cx="1012" cy="503" r="9" fill="#105010"/><circle cx="997" cy="507" r="9" fill="#701070"/><circle cx="1040" cy="502" r="9" fill="#308030"/><circle cx="1062" cy="502" r="9" fill="#f0c030"/><circle cx="1072" cy="502" r="9" fill="#80d070"/><circle cx="1082" cy="503" r="9" fill="#a0a090"/><circle cx="429" cy="586" r="9" fill="#20a0e0"/><circle cx="492" cy="590" r="9" fill="#20d0f0"/><circle cx="522" cy="576" r="9" fill="#b030b0"/><circle cx="597" cy="579" r="9" fill="#608070"/><circle cx="705" cy="583" r="9" fill="#609020"/><circle cx="892" cy="587" r="9" fill="#a01070"/><circle cx="610" cy="597" r="9" fill="#40b040"/><circle cx="619" cy="598" r="9" fill="#a040b0"/><circle cx="558" cy="595" r="9" fill="#d090e0"/><circle cx="545" cy="600" r="9" fill="#20a080"/><circle cx="691" cy="603" r="9" fill="#f0d050"/><circle cx="543" cy="619" r="9" fill="#f0c020"/><circle cx="565" cy="620" r="9" fill="#900030"/><circle cx="632" cy="620" r="9" fill="#104030"/><circle cx="695" cy="617" r="9" fill="#3040a0"/><circle cx="825" cy="611" r="9" fill="#30a030"/><circle cx="890" cy="615" r="9" fill="#f08050"/><circle cx="591" cy="648" r="9" fill="#b04060"/><circle cx="564" cy="653" r="9" fill="#20b0a0"/><circle cx="655" cy="648" r="9" fill="#40e090"/><circle cx="683" cy="653" r="9" fill="#70b030"/><circle cx="886" cy="648" r="9" fill="#f08060"/><circle cx="610" cy="669" r="9" fill="#2030f0"/><circle cx="674" cy="673" r="9" fill="#f0a0f0"/><circle cx="883" cy="675" r="5" fill="#8040c0"/><circle cx="579" cy="679" r="9" fill="#805040"/><circle cx="672" cy="690" r="9" fill="#f0c080"/><circle cx="697" cy="704" r="9" fill="#60c0a0"/><circle cx="597" cy="708" r="9" fill="#f06000"/><circle cx="615" cy="705" r="5" fill="#50c0f0"/><circle cx="880" cy="708" r="9" fill="#7060d0"/><circle cx="1090" cy="675" r="4" fill="#fff"/><circle cx="1079" cy="708" r="9" fill="#c09080"/>
</g>
<g transform="translate(0,711)">
<circle cx="601" cy="25" r="9" fill="#80f060"/><circle cx="614" cy="24" r="9" fill="#8010a0"/><circle cx="660" cy="7" r="9" fill="#6080c0"/><circle cx="722" cy="15" r="9" fill="#900090"/><circle cx="877" cy="16" r="9" fill="#d06060"/><circle cx="1068" cy="22" r="5" fill="#50e0b0"/><circle cx="648" cy="45" r="9" fill="#f060a0"/><circle cx="727" cy="47" r="9" fill="#e0a020"/><circle cx="743" cy="45" r="9" fill="#804090"/><circle cx="757" cy="45" r="9" fill="#d070b0"/><circle cx="779" cy="45" r="9" fill="#90d090"/><circle cx="795" cy="45" r="9" fill="#c03020"/><circle cx="812" cy="43" r="9" fill="#1080e0"/><circle cx="828" cy="43" r="9" fill="#d060f0"/><circle cx="847" cy="42" r="9" fill="#f0e020"/><circle cx="856" cy="41" r="9" fill="#c00010"/><circle cx="875" cy="50" r="9" fill="#e010c0"/><circle cx="598" cy="61" r="9" fill="#20d0d0"/><circle cx="613" cy="61" r="9" fill="#f08010"/><circle cx="771" cy="78" r="9" fill="#10c010"/><circle cx="872" cy="78" r="4" fill="#10c010"/><circle cx="636" cy="81" r="9" fill="#b0b0f0"/><circle cx="1058" cy="59" r="9" fill="#20a080"/><circle cx="1047" cy="92" r="9" fill="#2060a0"/><circle cx="968" cy="97" r="9" fill="#80e020"/><circle cx="595" cy="98" r="9" fill="#e01020"/><circle cx="612" cy="99" r="4" fill="#50e030"/><circle cx="795" cy="110" r="9" fill="#807090"/><circle cx="869" cy="111" r="9" fill="#506080"/><circle cx="910" cy="123" r="9" fill="#80f020"/><circle cx="636" cy="124" r="9" fill="#906000"/><circle cx="1037" cy="129" r="9" fill="#308010"/><circle cx="880" cy="132" r="9" fill="#2030d0"/><circle cx="590" cy="140" r="9" fill="#c0d080"/><circle cx="612" cy="137" r="9" fill="#e080e0"/><circle cx="779" cy="138" r="9" fill="#4080b0"/><circle cx="858" cy="139" r="9" fill="#d04050"/><circle cx="867" cy="141" r="9" fill="#a0e030"/><circle cx="820" cy="143" r="9" fill="#20d070"/><circle cx="829" cy="147" r="9" fill="#f000a0"/><circle cx="804" cy="150" r="9" fill="#a0f030"/><circle cx="770" cy="153" r="9" fill="#e0b0c0"/><circle cx="740" cy="155" r="9" fill="#b0e040"/><circle cx="711" cy="162" r="9" fill="#3060c0"/><circle cx="1026" cy="163" r="9" fill="#504080"/><circle cx="585" cy="178" r="9" fill="#50b020"/><circle cx="610" cy="180" r="9" fill="#a05080"/><circle cx="640" cy="172" r="9" fill="#f090a0"/><circle cx="847" cy="175" r="9" fill="#f0a040"/><circle cx="863" cy="173" r="9" fill="#f0b030"/><circle cx="1015" cy="199" r="9" fill="#d08010"/><circle cx="762" cy="198" r="9" fill="#a020b0"/><circle cx="860" cy="204" r="9" fill="#70e040"/><circle cx="872" cy="209" r="9" fill="#806040"/><circle cx="610" cy="218" r="9" fill="#a09090"/><circle cx="642" cy="222" r="9" fill="#80d0f0"/><circle cx="579" cy="227" r="9" fill="#c020e0"/><circle cx="857" cy="235" r="9" fill="#2070e0"/><circle cx="898" cy="241" r="9" fill="#d01010"/><circle cx="1005" cy="231" r="9" fill="#40e0f0"/><circle cx="746" cy="255" r="9" fill="#2030f0"/><circle cx="575" cy="262" r="9" fill="#206030"/><circle cx="854" cy="266" r="9" fill="#207020"/><circle cx="919" cy="269" r="9" fill="#90e020"/><circle cx="994" cy="270" r="9" fill="#6080f0"/><circle cx="851" cy="296" r="9" fill="#1050a0"/><circle cx="943" cy="299" r="9" fill="#d050d0"/><circle cx="998" cy="306" r="9" fill="#904050"/><circle cx="648" cy="287" r="9" fill="#d0d090"/><circle cx="571" cy="312" r="9" fill="#2090d0"/><circle cx="729" cy="317" r="9" fill="#a01090"/><circle cx="849" cy="328" r="9" fill="#50d0d0"/><circle cx="966" cy="328" r="9" fill="#5080a0"/><circle cx="651" cy="338" r="9" fill="#e08050"/><circle cx="1008" cy="340" r="9" fill="#3090e0"/><circle cx="846" cy="357" r="9" fill="#701010"/><circle cx="712" cy="378" r="9" fill="#1020a0"/><circle cx="999" cy="372" r="9" fill="#e020c0"/><circle cx="1018" cy="378" r="9" fill="#903040"/><circle cx="1011" cy="389" r="9" fill="#000"/><circle cx="1026" cy="412" r="9" fill="#201030"/><circle cx="843" cy="393" r="9" fill="#2030d0"/><circle cx="656" cy="399" r="9" fill="#0000f0"/><circle cx="840" cy="419" r="9" fill="#f00020"/><circle cx="1031" cy="428" r="9" fill="#60c0f0"/><circle cx="695" cy="438" r="9" fill="#b03030"/><circle cx="836" cy="456" r="9" fill="#1000f0"/><circle cx="836" cy="475" r="9" fill="#00f070"/><circle cx="1041" cy="473" r="9" fill="#d0f020"/><circle cx="647" cy="493" r="9" fill="#f0c020"/><circle cx="678" cy="497" r="9" fill="#e0a060"/><circle cx="830" cy="526" r="9" fill="#70a020"/><circle cx="1052" cy="514" r="9" fill="#d08010"/><circle cx="1058" cy="536" r="9" fill="#903060"/><circle cx="660" cy="559" r="9" fill="#c030a0"/><circle cx="824" cy="581" r="9" fill="#f00020"/><circle cx="823" cy="592" r="9" fill="#9020a0"/><circle cx="644" cy="617" r="9" fill="#8050c0"/><circle cx="818" cy="645" r="9" fill="#109020"/><circle cx="816" cy="666" r="9" fill="#40d0d0"/><circle cx="627" cy="679" r="9" fill="#907010"/>
</g>
</g>
</svg>
<div class="zoom">
<a class="zoom-btn">+</a>
<a class="zoom-btn">−</a>
</div>
<div class="attrib"><a>Leaflet</a> | © <a>OpenStreetMap</a> contributors</div>
</div>
</div>
<div class="settings">
<section class="col">
<h3>Axis Settings</h3>
<div class="row"><label>X-axis Min:</label><input class="in" value="0"></div>
<div class="row"><label>X-axis Max:</label><input class="in" value="60"></div>
<div class="row"><label>Y-axis Min:</label><input class="in" value="0"></div>
<div class="row"><label>Y-axis Max:</label><input class="in" value="14"></div>
</section>
<section class="col">
<h3>Axis Settings</h3>
<div class="row"><label>X-axis Min:</label><input class="in" value="-60"></div>
<div class="row"><label>X-axis Max:</label><input class="in" value="40"></div>
<div class="row"><label>Y-axis Min:</label><input class="in" value="0"></div>
<div class="row"><label>Y-axis Max:</label><input class="in" value="14"></div>
</section>
<section class="col">
<h3>Map of Sampling Locations</h3>
<div class="row"><label>Latitude:</label><input class="in" value="13"></div>
<div class="row"><label>Longitude:</label><input class="in" value="77.5"></div>
<div class="row"><label>Zoom Level:</label><input class="in" value="7"></div>
</section>
</div>
<p class="foot">Made by <a href="#">Carbform</a>. Find this on <a href="#">GitHub</a></p>
</div>
</body>
</html>
```
FILE: styles.css
```css
* { box-sizing: border-box; }
html, body { margin: 0; padding: 0; background: #fff; }
body { font-family: Inter, "Noto Sans", sans-serif; color: #000; overflow: hidden; height: 896px; }
.page { padding-left: 15px; }
h1 { margin: 0; font-size: 29.8px; line-height: 30px; font-weight: 700; text-align: center; }
h2 { margin: 29px 0 0; font-size: 22.8px; line-height: 30px; font-weight: 700; text-align: center; }
.charts { display: flex; justify-content: center; margin-top: 64px; }
.card { width: 468px; height: 467px; background: #fff; box-shadow: 0 0 5px rgba(0,0,0,.09); }
.chart { display: block; font-family: "Liberation Sans", Arial, sans-serif; font-size: 11px; will-change: transform; }
.c-title { font-weight: 700; text-anchor: middle; fill: #000; }
.c-legend { fill: #777; }
.c-tick-y text { text-anchor: end; fill: #7c7c7c; font-size: 11.5px; }
.c-tick-x text { text-anchor: middle; fill: #7c7c7c; font-size: 11.5px; }
.c-axis { text-anchor: middle; fill: #333; }
.grid { fill: none; stroke: #ababab; stroke-width: 1; }
.red { fill: #f00; }
.blue { fill: #00f; }
.map { position: relative; width: 473px; height: 468px; overflow: hidden; }
.map-svg { display: block; font-family: "Noto Sans", sans-serif; }
.tiles { filter: blur(.8px); }
.dots { filter: blur(.3px); }
.land { fill: #f2efe9; }
.specks { fill: url(#specks); }
.speck { fill: #a9d5e5; }
.urban { fill: #ece9e4; }
.wood { fill: #c6deb0; stroke: #c6deb0; stroke-width: 16; stroke-linejoin: round; }
.park { fill: #b9d8a6; stroke: #8fbf82; stroke-width: 2; stroke-linejoin: round; }
.minor { fill: none; stroke: #d2cfc8; stroke-width: 2.5; stroke-linejoin: round; }
.water { fill: none; stroke: #b7dbe6; stroke-width: 4; stroke-linejoin: round; }
.boundary { fill: none; stroke: #c8a6cc; stroke-width: 3.5; stroke-dasharray: 14 4; }
.road { fill: none; stroke: #f8cf9c; stroke-width: 4.5; stroke-linejoin: round; }
.road.thin { stroke-width: 3; }
.trunk { fill: none; stroke: #f4ab8e; stroke-width: 5; stroke-linejoin: round; }
.motor { fill: none; stroke: #ec8a99; stroke-width: 6; stroke-linejoin: round; }
.rail { fill: none; stroke: #9a9a9a; stroke-width: 3; }
.lb { font-size: 27px; fill: #555; text-anchor: middle; paint-order: stroke; stroke: #f5f3ef; stroke-width: 5px; stroke-linejoin: round; }
.lb.big { font-size: 33px; }
.lb.pur { fill: #b58fbf; font-size: 27px; }
.lb.grn { fill: #5b9a55; }
.zoom { position: absolute; left: 9px; top: 9px; width: 29px; border: 1px solid #bbb; border-radius: 4px; background: #fff; overflow: hidden; }
.zoom-btn { display: block; height: 27px; text-align: center; font: 700 22px/25px "Liberation Sans", sans-serif; color: #000; border-bottom: 1px solid #ccc; }
.zoom-btn:last-child { border-bottom: 0; }
.attrib { position: absolute; right: 0; bottom: 0; height: 16px; padding: 0 5px; background: rgba(255,255,255,.7); font: 9.6px/16px "Liberation Sans", sans-serif; color: #333; white-space: nowrap; }
.attrib a { color: #0078a8; }
.settings { display: flex; justify-content: center; }
.col { width: 378px; text-align: center; }
h3 { margin: 18px 0 19px; font-size: 17.5px; line-height: 24px; font-weight: 700; }
.row { display: flex; justify-content: center; align-items: center; gap: 4px; margin-bottom: 18px; height: 29px; font-size: 14.6px; }
.row label { padding-bottom: 2px; }
.in { width: 242px; height: 29px; border: 1px solid #767676; padding: 0 4px 2px; font: 12.6px Inter, sans-serif; color: #000; background: #fff; border-radius: 0; }
.foot { margin: -6px 0 0; text-align: center; font-size: 15px; line-height: 24px; }
.foot a { color: #f00; }
```
